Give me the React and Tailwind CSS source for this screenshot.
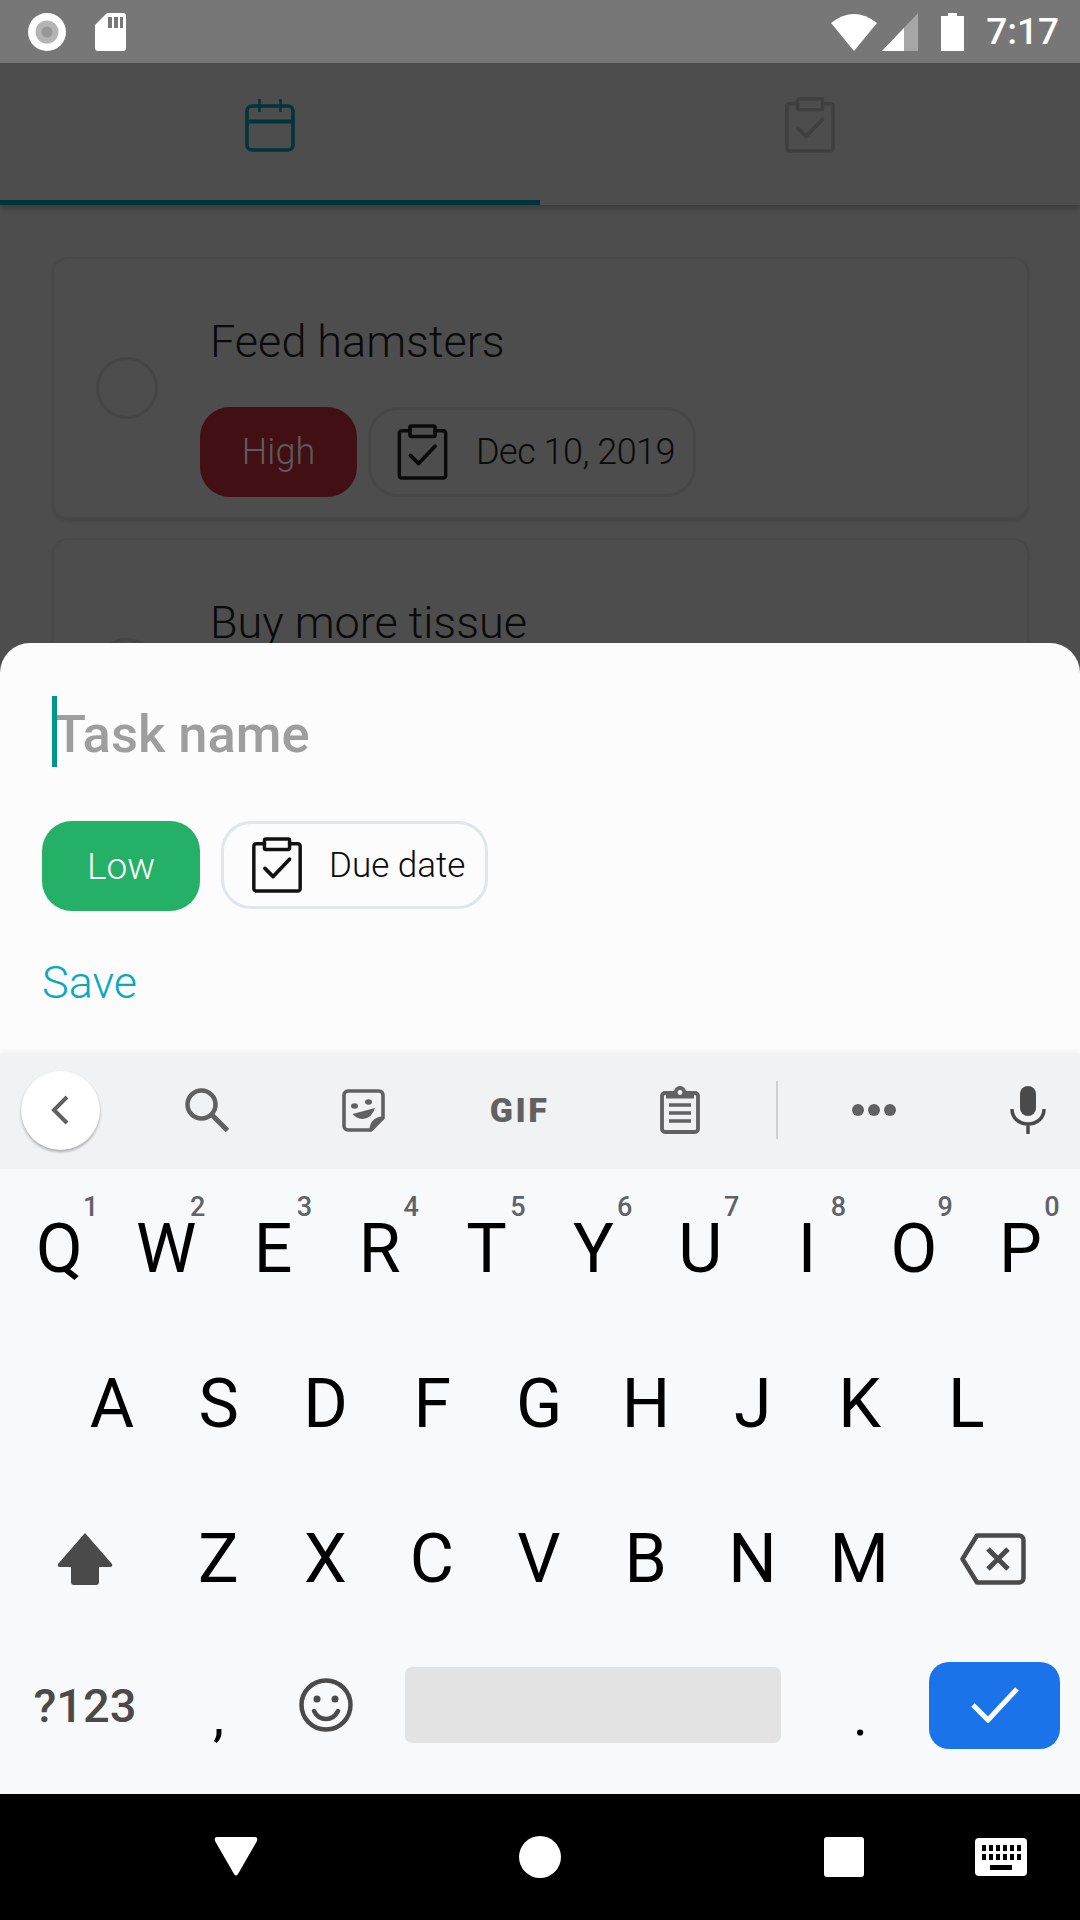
const CheckClip = ({ className, stroke = "#111" }) => (
  <svg viewBox="0 0 52 58" className={className} fill="none" stroke={stroke} strokeWidth="3.6" strokeLinejoin="round" strokeLinecap="round">
    <path d="M13 7H4.5a2.5 2.5 0 0 0-2.5 2.5v44a2.5 2.5 0 0 0 2.5 2.5h43a2.5 2.5 0 0 0 2.5-2.5v-44A2.5 2.5 0 0 0 47.500 7H39" />
    <rect x="13" y="2" width="26" height="11" rx="1.500" />
    <path d="M13.500 32.500l8.500 8.500 17-18" strokeWidth="3.800" />
  </svg>
);

const Calendar = ({ className }) => (
  <svg viewBox="0 0 50 54" className={className} fill="none" stroke="#00353a" strokeWidth="3.600" strokeLinejoin="round">
    <rect x="2" y="8" width="46" height="44" rx="5" />
    <path d="M2 23.500h46" strokeWidth="4" />
    <path d="M14.500 1v13M35.500 1v13" strokeWidth="2.600" />
  </svg>
);

const row1 = [["Q", "1"], ["W", "2"], ["E", "3"], ["R", "4"], ["T", "5"], ["Y", "6"], ["U", "7"], ["I", "8"], ["O", "9"], ["P", "0"]];
const row2 = ["A", "S", "D", "F", "G", "H", "J", "K", "L"];
const row3 = ["Z", "X", "C", "V", "B", "N", "M"];

const Key = ({ children, hint }) => (
  <div className="relative flex h-[155px] w-[106.800px] shrink-0 items-center justify-center text-[68px] leading-none text-black">
    {children}
    {hint && <span className="absolute right-[7px] top-[20px] w-[30px] text-center text-[27px] font-medium leading-[30px] text-[#5f6368]">{hint}</span>}
  </div>
);

const Card = ({ title, children }) => (
  <div className="flex h-[262px] shrink-0 rounded-[16px] border-2 border-[#484848] shadow-[0_2px_3px_rgba(0,0,0,0.12)]">
    <div className="ml-[42px] mt-[98px] h-[62px] w-[62px] shrink-0 rounded-full border-[3px] border-[#454545]" />
    <div className="ml-[42px] flex flex-col">
      <div className="ml-[10px] mt-[58px] text-[45px] font-light leading-[50px] text-[#0a0a0a]">{title}</div>
      {children}
    </div>
  </div>
);

export default function App() {
  return (
    <div className="flex h-[1920px] w-[1080px] flex-col overflow-hidden bg-[#4d4d4d] font-['Roboto',sans-serif]">
      {/* status bar */}
      <div className="flex h-[63px] shrink-0 items-center bg-[#777777] text-white">
        <svg viewBox="0 0 38 38" className="ml-[28px] h-[38px] w-[38px]">
          <circle cx="19" cy="19" r="19" fill="#fff" />
          <circle cx="19" cy="19" r="11.500" fill="#b4b4b4" />
          <circle cx="19" cy="19" r="5.500" fill="#979797" />
        </svg>
        <svg viewBox="0 0 31 38" className="ml-[29px] h-[38px] w-[31px]">
          <path d="M12 0h16a3 3 0 0 1 3 3v32a3 3 0 0 1-3 3H3a3 3 0 0 1-3-3V12z" fill="#fff" />
          <path d="M13 4h4v11h-4zM19 4h4v11h-4zM25 4h3v11h-3z" fill="#777" />
        </svg>
        <div className="flex-1" />
        <svg viewBox="0 0 46 38" className="h-[38px] w-[46px]">
          <path d="M23 38 L0 10 Q23 -8 46 10z" fill="#fff" />
        </svg>
        <svg viewBox="0 0 36 38" className="ml-[5px] h-[38px] w-[36px]">
          <path d="M36 0v38H0z" fill="#a6a6a6" />
          <path d="M22 15v23H0z" fill="#fff" />
        </svg>
        <svg viewBox="0 0 23 38" className="ml-[23px] h-[38px] w-[23px]">
          <path d="M7 0h9v3h7v35H0V3h7z" fill="#fff" />
        </svg>
        <span className="ml-[22px] mr-[21px] text-[37px] font-medium leading-none">7:17</span>
      </div>

      {/* tabs */}
      <div className="relative z-10 flex h-[142px] shrink-0 bg-[#4d4d4d] shadow-[0_3px_6px_rgba(0,0,0,0.25)]">
        <div className="flex w-[540px] flex-col items-center border-b-[5px] border-[#00353a]">
          <Calendar className="mt-[35px] h-[54px] w-[50px]" />
        </div>
        <div className="flex w-[540px] flex-col items-center">
          <CheckClip className="mt-[34px] h-[56px] w-[50px]" stroke="#3f3f3f" />
        </div>
      </div>

      {/* list */}
      <div className="flex h-[438px] shrink-0 flex-col gap-[19px] overflow-hidden pl-[52px] pr-[51px] pt-[52px]">
        <Card title="Feed hamsters">
          <div className="mt-[40px] flex gap-[11px]">
            <div className="flex h-[90px] w-[157px] items-center justify-center rounded-[30px] bg-[#420f14] text-[36px] font-light text-[#5c5c5c]">High</div>
            <div className="flex h-[90px] w-[328px] items-center rounded-[30px] border-[3px] border-[#474747]">
              <CheckClip className="ml-[26px] h-[56px] w-[51px]" stroke="#0a0a0a" />
              <span className="ml-[28px] text-[36px] font-light tracking-[-0.5px] text-[#0a0a0a]">Dec 10, 2019</span>
            </div>
          </div>
        </Card>
        <Card title="Buy more tissue" />
      </div>

      {/* sheet */}
      <div className="flex h-[410px] shrink-0 flex-col rounded-t-[30px] bg-[#fcfcfd]">
        <div className="relative ml-[52px] mt-[53px] h-[71px]">
          <div className="absolute left-0 top-0 h-[71px] w-[5px] bg-[#009688]" />
          <div className="pl-[2px] text-[52.500px] font-medium leading-[76px] text-[#9e9e9e]">Task name</div>
        </div>
        <div className="ml-[42px] mt-[54px] flex items-start gap-[21px]">
          <div className="flex h-[90px] w-[158px] items-center justify-center rounded-[30px] bg-[#24b066] pt-[2px] text-[37px] font-light text-white">Low</div>
          <div className="flex h-[88px] w-[267px] items-center rounded-[30px] border-[3px] border-[#e1e5ed]">
            <CheckClip className="ml-[27px] h-[56px] w-[52px]" />
            <span className="ml-[26px] pt-[3px] text-[35px] font-light text-[#0a0a0a]">Due date</span>
          </div>
        </div>
        <div className="ml-[42px] mt-[46px] text-[45px] font-light leading-[52px] text-[#0aa8c0]">Save</div>
      </div>

      {/* keyboard toolbar */}
      <div className="relative flex h-[116px] shrink-0 items-center bg-[#f1f2f4] pb-[2px] text-[#616161] shadow-[0_-3px_5px_rgba(0,0,0,0.035)]">
        <div className="ml-[21px] flex h-[79px] w-[79px] items-center justify-center rounded-full bg-white shadow-[0_2px_3px_rgba(0,0,0,0.3)]">
          <svg viewBox="0 0 18 30" className="mr-[2px] h-[30px] w-[18px]" fill="none" stroke="#616161" strokeWidth="4"><path d="M16 2L3 15l13 13" /></svg>
        </div>
        <svg viewBox="0 0 44 44" className="ml-[85px] h-[44px] w-[44px]" fill="none" stroke="#616161" strokeWidth="4.500"><circle cx="16.500" cy="16.500" r="14" /><path d="M27 27l15.500 15.500" strokeWidth="5" /></svg>
        <svg viewBox="0 0 43 43" className="ml-[113px] h-[43px] w-[43px]" fill="none" stroke="#616161" strokeWidth="3.600" strokeLinejoin="round">
          <path d="M6 2h31a4 4 0 0 1 4 4v23L29 41H6a4 4 0 0 1-4-4V6a4 4 0 0 1 4-4z" />
          <path d="M41 28q-12 1-13 13z" fill="#616161" strokeWidth="1.500" />
          <ellipse cx="12.500" cy="17" rx="3.500" ry="2.700" fill="#616161" stroke="none" />
          <ellipse cx="26.500" cy="13" rx="3.500" ry="2.700" fill="#616161" stroke="none" />
          <path d="M10.500 25L33 19q-3 10-12 11q-6 0-10.500-5z" fill="#616161" stroke="none" />
        </svg>
        <span className="ml-[104px] flex h-[40px] w-[61px] items-center justify-center text-[34px] font-black leading-none tracking-[2.500px] text-[#616161]">GIF</span>
        <svg viewBox="0 0 40 48" className="ml-[110px] h-[48px] w-[40px]" fill="none" stroke="#616161" strokeWidth="3.800" strokeLinejoin="round">
          <rect x="2" y="7" width="36" height="39" rx="3" />
          <path d="M6 6h28v6.500H6z" fill="#616161" stroke="none" />
          <circle cx="20" cy="6" r="6" fill="#616161" stroke="none" />
          <circle cx="20" cy="6.500" r="2.400" fill="#f1f2f4" stroke="none" />
          <path d="M9 19h22M9 27h22M9 35h22" strokeWidth="3.400" />
        </svg>
        <div className="ml-[76px] h-[58px] w-[2px] bg-[#cfd0d2]" />
        <svg viewBox="0 0 44 14" className="ml-[74px] h-[14px] w-[44px]" fill="#616161"><circle cx="6" cy="7" r="6" /><circle cx="22" cy="7" r="6" /><circle cx="38" cy="7" r="6" /></svg>
        <svg viewBox="0 0 36 48" className="ml-[114px] h-[48px] w-[36px]" fill="none" stroke="#4a4a4a" strokeWidth="3.500">
          <rect x="10" y="0" width="16" height="30" rx="8" fill="#4a4a4a" stroke="none" />
          <path d="M2 23c0 9 7 15 16 15s16-6 16-15M18 38v10" />
        </svg>
      </div>

      {/* keys */}
      <div className="flex flex-1 flex-col bg-[#f8f9fb] pt-[2.500px]">
        <div className="flex pl-[6px]">
          {row1.map(([k, n]) => <Key key={k} hint={n}>{k}</Key>)}
        </div>
        <div className="flex pl-[58.600px]">
          {row2.map((k) => <Key key={k}>{k}</Key>)}
        </div>
        <div className="flex">
          <div className="flex h-[155px] w-[165px] shrink-0 items-center justify-center pl-[5px]">
            <svg viewBox="0 0 56 52" className="h-[52px] w-[56px]"><path d="M28 0 L55 31q1 3-2 3H42v15q0 3-3 3H17q-3 0-3-3V34H3q-3 0-2-3z" fill="#4a4a4a" /></svg>
          </div>
          {row3.map((k) => <Key key={k}>{k}</Key>)}
          <div className="flex h-[155px] flex-1 items-center justify-center pr-[7px]">
            <svg viewBox="0 0 66 52" className="h-[52px] w-[66px]" fill="none" stroke="#4a4a4a" strokeWidth="4.500" strokeLinejoin="round">
              <path d="M17 2.500h42a4.500 4.500 0 0 1 4.500 4.500v38a4.500 4.500 0 0 1-4.500 4.500H17L2.500 26z" />
              <path d="M28 16l20 20M48 16L28 36" strokeWidth="5" />
            </svg>
          </div>
        </div>
        <div className="flex h-[137px] items-center">
          <div className="flex h-[137px] w-[165px] shrink-0 items-center justify-center pl-[5px] pt-[2px] text-[47px] font-medium text-[#4a4a4a]">?123</div>
          <div className="flex h-[137px] w-[107px] shrink-0 items-center justify-center pt-[22px] text-[56px] text-black">,</div>
          <div className="flex h-[137px] w-[107px] shrink-0 items-center justify-center">
            <svg viewBox="0 0 54 54" className="h-[54px] w-[54px]" fill="none" stroke="#4a4a4a" strokeWidth="4.500">
              <circle cx="27" cy="27" r="24.500" />
              <circle cx="18" cy="21" r="3.500" fill="#4a4a4a" stroke="none" />
              <circle cx="36" cy="21" r="3.500" fill="#4a4a4a" stroke="none" />
              <path d="M15 33c3 6 8 8 12 8s9-2 12-8" strokeLinecap="round" />
            </svg>
          </div>
          <div className="ml-[26px] h-[76px] w-[376px] shrink-0 rounded-[7px] bg-[#e2e3e2]" />
          <div className="ml-[26px] flex h-[137px] w-[107px] shrink-0 items-center justify-center pt-[22px] text-[56px] text-black">.</div>
          <div className="ml-[15px] flex h-[87px] w-[131px] shrink-0 items-center justify-center rounded-[20px] bg-[#1a73e8]">
            <svg viewBox="0 0 48 36" className="h-[36px] w-[48px]" fill="none" stroke="#fff" strokeWidth="5"><path d="M2 18l15 15L46 2" /></svg>
          </div>
        </div>
      </div>

      {/* nav */}
      <div className="flex h-[126px] shrink-0 items-center bg-black">
        <svg viewBox="0 0 44 40" className="ml-[214px] h-[40px] w-[44px]"><path d="M3 0h38q3 0 2 4L24 37q-2 3-4 0L1 4q-1-4 2-4z" fill="#fff" /></svg>
        <div className="ml-[261px] h-[42px] w-[42px] rounded-full bg-white" />
        <div className="ml-[263px] h-[40px] w-[40px] rounded-[3px] bg-white" />
        <svg viewBox="0 0 52 38" className="ml-[111px] h-[38px] w-[52px]">
          <rect width="52" height="38" rx="4" fill="#fff" />
          <path d="M7 7h4v6H7zM14 7h4v6h-4zM21 7h4v6h-4zM28 7h4v6h-4zM35 7h4v6h-4zM42 7h4v6h-4zM7 16h4v6H7zM14 16h4v6h-4zM21 16h4v6h-4zM28 16h4v6h-4zM35 16h4v6h-4zM42 16h4v6h-4zM15 27h22v5H15z" fill="#000" />
        </svg>
      </div>
    </div>
  );
}
